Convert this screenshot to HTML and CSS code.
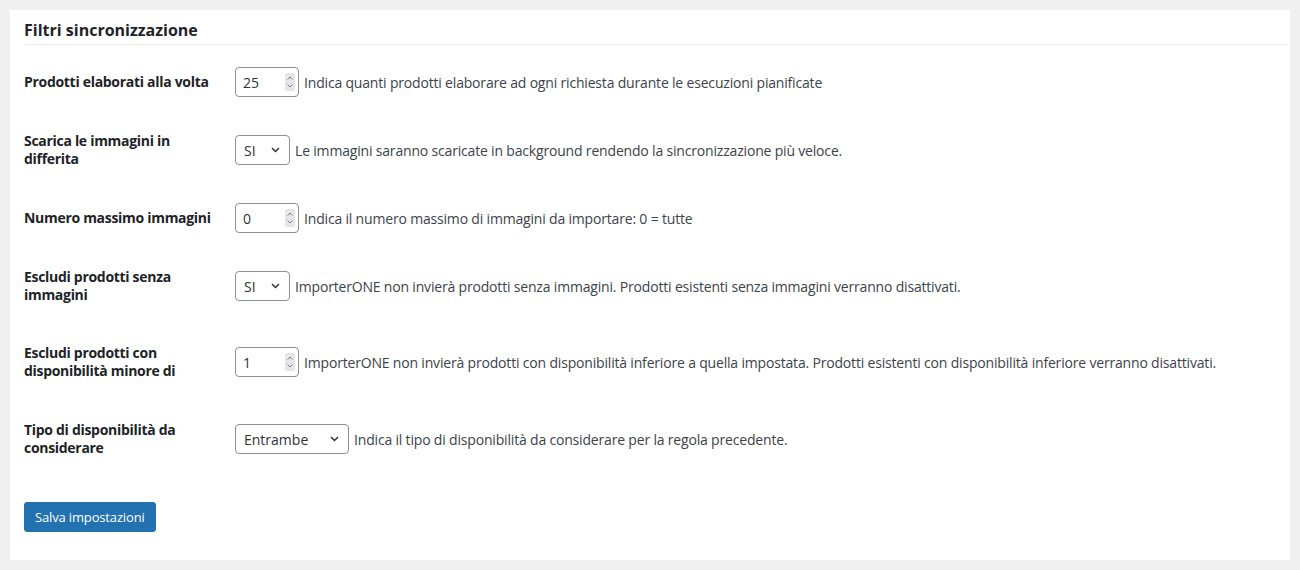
FILE: index.html
```html
<!DOCTYPE html>
<html lang="it">
<head>
<meta charset="utf-8">
<title>Filtri sincronizzazione</title>
<link rel="stylesheet" href="styles.css">
</head>
<body>
<div class="panel">
  <h2 class="panel-title">Filtri sincronizzazione</h2>
  <form class="settings">
    <div class="field-row">
      <label class="field-label" for="batch">Prodotti elaborati alla volta</label>
      <div class="field-control">
        <div class="num-field">
          <input id="batch" type="text" value="25">
          <span class="spinner"><svg width="10" height="18" viewBox="0 0 10 18"><path d="M2.5 6.5 5 4 7.5 6.5M2.5 11.5 5 14 7.5 11.5" fill="none" stroke="#7a7a80" stroke-width="1"/></svg></span>
        </div>
        <span class="field-desc">Indica quanti prodotti elaborare ad ogni richiesta durante le esecuzioni pianificate</span>
      </div>
    </div>

    <div class="field-row">
      <label class="field-label" for="deferred">Scarica le immagini in differita</label>
      <div class="field-control">
        <div class="select-field select-short">
          <select id="deferred"><option>SI</option><option>NO</option></select>
          <svg class="chev" width="9" height="6" viewBox="0 0 9 6"><path d="M1 1 4.5 4.5 8 1" fill="none" stroke="#2c3338" stroke-width="1.5"/></svg>
        </div>
        <span class="field-desc">Le immagini saranno scaricate in background rendendo la sincronizzazione più veloce.</span>
      </div>
    </div>

    <div class="field-row">
      <label class="field-label" for="maximg">Numero massimo immagini</label>
      <div class="field-control">
        <div class="num-field">
          <input id="maximg" type="text" value="0">
          <span class="spinner"><svg width="10" height="18" viewBox="0 0 10 18"><path d="M2.5 6.5 5 4 7.5 6.5M2.5 11.5 5 14 7.5 11.5" fill="none" stroke="#7a7a80" stroke-width="1"/></svg></span>
        </div>
        <span class="field-desc">Indica il numero massimo di immagini da importare: 0 = tutte</span>
      </div>
    </div>

    <div class="field-row">
      <label class="field-label" for="noimg">Escludi prodotti senza immagini</label>
      <div class="field-control">
        <div class="select-field select-short">
          <select id="noimg"><option>SI</option><option>NO</option></select>
          <svg class="chev" width="9" height="6" viewBox="0 0 9 6"><path d="M1 1 4.5 4.5 8 1" fill="none" stroke="#2c3338" stroke-width="1.5"/></svg>
        </div>
        <span class="field-desc">ImporterONE non invierà prodotti senza immagini. Prodotti esistenti senza immagini verranno disattivati.</span>
      </div>
    </div>

    <div class="field-row field-row--wide">
      <label class="field-label" for="minstock">Escludi prodotti con disponibilità minore di</label>
      <div class="field-control">
        <div class="num-field">
          <input id="minstock" type="text" value="1">
          <span class="spinner"><svg width="10" height="18" viewBox="0 0 10 18"><path d="M2.5 6.5 5 4 7.5 6.5M2.5 11.5 5 14 7.5 11.5" fill="none" stroke="#7a7a80" stroke-width="1"/></svg></span>
        </div>
        <span class="field-desc">ImporterONE non invierà prodotti con disponibilità inferiore a quella impostata. Prodotti esistenti con disponibilità inferiore verranno disattivati.</span>
      </div>
    </div>

    <div class="field-row field-row--last">
      <label class="field-label" for="stocktype">Tipo di disponibilità da considerare</label>
      <div class="field-control">
        <div class="select-field select-long">
          <select id="stocktype"><option>Entrambe</option></select>
          <svg class="chev" width="9" height="6" viewBox="0 0 9 6"><path d="M1 1 4.5 4.5 8 1" fill="none" stroke="#2c3338" stroke-width="1.5"/></svg>
        </div>
        <span class="field-desc">Indica il tipo di disponibilità da considerare per la regola precedente.</span>
      </div>
    </div>

    <div class="form-actions">
      <button type="button" class="btn-primary">Salva impostazioni</button>
    </div>
  </form>
</div>
</body>
</html>
```

FILE: styles.css
```css
* { box-sizing: border-box; }

html, body {
  margin: 0;
  background: #f0f0f1;
}

body {
  padding: 10px;
  font-family: "Open Sans", "Noto Sans", sans-serif;
  font-size: 14px;
  color: #1d2327;
}

.panel {
  background: #fff;
  width: 1280px;
  padding: 0 2px 28px 14px;
}

.panel-title {
  margin: 0;
  padding: 10px 0 4px;
  font-size: 16px;
  line-height: 20px;
  font-weight: 700;
  color: #1d2327;
  border-bottom: 1px solid #eaeaea;
}

.settings {
  padding-top: 3px;
}

.field-row {
  display: grid;
  grid-template-columns: 211px 1fr;
  align-items: center;
  min-height: 68px;
}

.field-row--wide { min-height: 84px; }
.field-row--last { min-height: 70px; }

.field-label {
  font-weight: 700;
  line-height: 18px;
  letter-spacing: -0.3px;
  padding-right: 11px;
  color: #1d2327;
}

.field-control {
  display: flex;
  align-items: center;
  gap: 5px;
}

.field-desc {
  color: #3c434a;
  letter-spacing: -0.18px;
  white-space: nowrap;
}

.num-field {
  display: flex;
  align-items: center;
  width: 64px;
  height: 30px;
  border: 1px solid #8c8f94;
  border-radius: 4px;
  background: #fff;
  padding: 0 3px 0 7px;
}

.num-field input {
  flex: 1;
  min-width: 0;
  border: 0;
  outline: 0;
  padding: 0;
  font: inherit;
  color: #2c3338;
  background: transparent;
}

.spinner {
  display: flex;
  width: 10px;
  height: 18px;
  background: #e6e6ea;
  border-radius: 2px;
}

.select-field {
  position: relative;
  height: 30px;
}

.select-short { width: 55px; }
.select-long { width: 114px; }

.select-field select {
  appearance: none;
  -webkit-appearance: none;
  width: 100%;
  height: 30px;
  border: 1px solid #8c8f94;
  border-radius: 4px;
  background: #fff;
  padding: 0 24px 0 8px;
  font: inherit;
  color: #2c3338;
}

.select-field .chev {
  position: absolute;
  right: 10px;
  top: 12px;
  pointer-events: none;
}

.form-actions {
  padding-top: 28px;
}

.btn-primary {
  height: 30px;
  padding: 0 10px;
  border: 1px solid #2271b1;
  border-radius: 3px;
  background: #2271b1;
  color: #fff;
  font: inherit;
  font-size: 13px;
  letter-spacing: -0.15px;
  cursor: pointer;
}
```
